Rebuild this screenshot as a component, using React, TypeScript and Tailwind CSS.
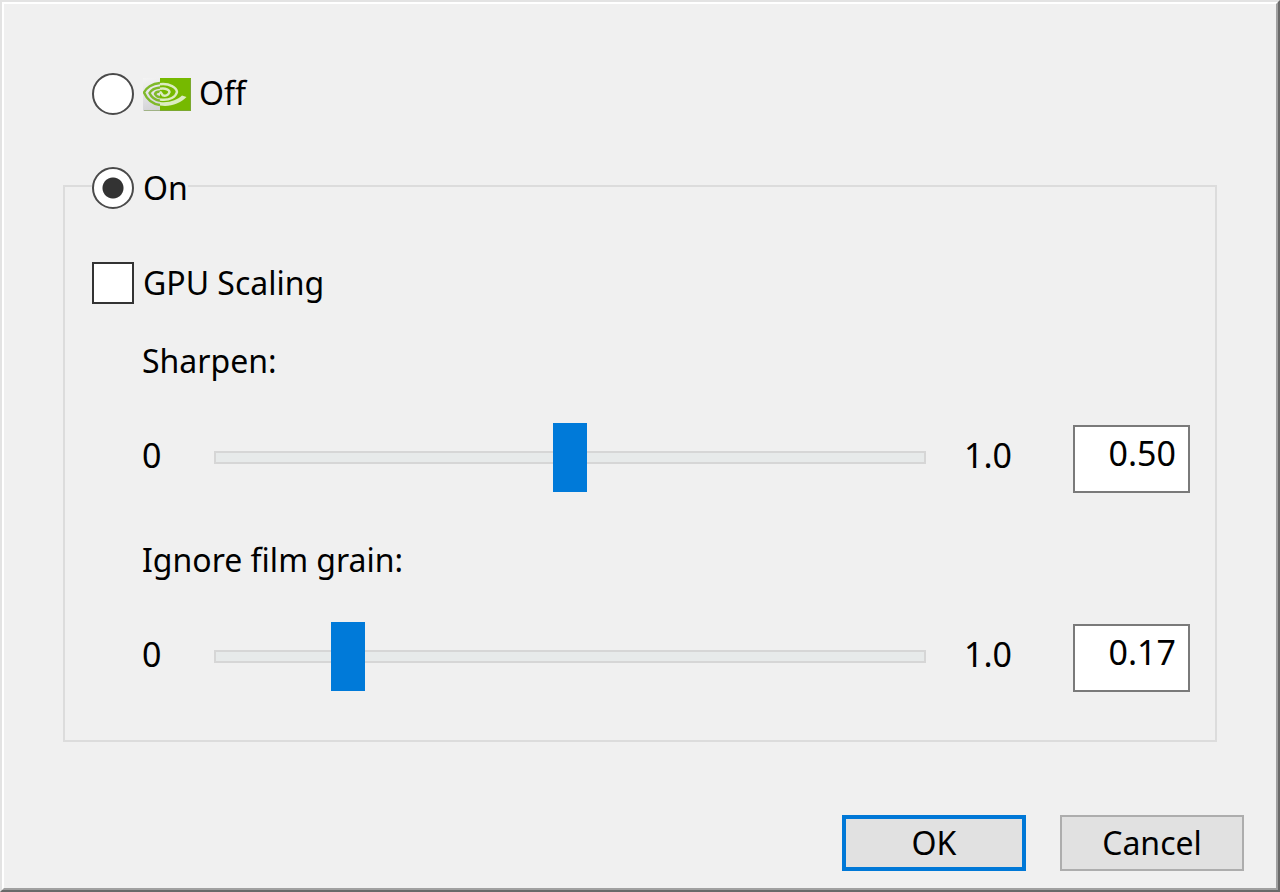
import { useState } from "react";

const radioClass =
  "size-[42px] shrink-0 appearance-none rounded-full border-2 border-[#4a4a4a] bg-white checked:bg-[radial-gradient(circle,#333333_10px,#ffffff_11px)]";

function NvidiaLogo() {
  return (
    <svg viewBox="0 0 48 33" aria-hidden="true" className="ml-[9px] h-[33px] w-12 shrink-0" fill="none">
      <defs>
        <linearGradient id="silver" x1="0" y1="0" x2="0.4" y2="1">
          <stop offset="0" stopColor="#f4f4f4" />
          <stop offset="1" stopColor="#d0d0d4" />
        </linearGradient>
      </defs>
      <rect width="48" height="33" fill="url(#silver)" />
      <rect x="17" width="31" height="33" fill="#76b900" />
      <path d="M1 32.5H47.5V1" stroke="#7f9d50" opacity="0.6" />
      <g stroke="#7fb92a" strokeWidth="2.4">
        <path d="M17 5C9 5.500 3 10 1 14.500C4 21.500 9 26 17 27" />
        <path d="M17 9.500C11 10 8 12.500 6.500 15C8.500 19.500 12 22 17 22.800" />
        <path d="M17 13.500C14 13.500 12.500 14.500 12 16C13 18 14.500 19 17 19.300" />
      </g>
      <g stroke="#dcecc0" strokeWidth="2.400">
        <path d="M17 6.200C27 5 33.500 10 34 14C33 18.500 27 23 17 21.500" />
        <path d="M17 10.800C23 9.800 26.500 12 26.500 14.200C25.500 17 22.500 18.500 20 17.500L17 13.500" />
      </g>
      <path d="M17 24C27 25 34 22 39 17.500L43.500 19C37 26 27 29 17 27.500Z" fill="#dcecc0" />
    </svg>
  );
}

type LevelProps = {
  id: string;
  label: string;
  value: number;
  onChange: (value: number) => void;
};

function Level({ id, label, value, onChange }: LevelProps) {
  return (
    <div className="pl-[50px]">
      <label htmlFor={id} className="block leading-10">
        {label}
      </label>
      <div className="mt-10 flex items-center">
        <span className="w-[72px] shrink-0 pb-1 text-[34px] leading-10">0</span>
        <input
          id={id}
          type="range"
          min={0}
          max={1}
          step={0.01}
          value={value}
          onChange={(e) => onChange(Number(e.target.value))}
          className="h-[69px] min-w-0 flex-1 appearance-none bg-transparent [&::-webkit-slider-runnable-track]:h-[13px] [&::-webkit-slider-runnable-track]:border-2 [&::-webkit-slider-runnable-track]:border-[#d6d6d6] [&::-webkit-slider-runnable-track]:bg-[#e7eaea] [&::-webkit-slider-thumb]:-mt-[30px] [&::-webkit-slider-thumb]:h-[69px] [&::-webkit-slider-thumb]:w-[34px] [&::-webkit-slider-thumb]:appearance-none [&::-webkit-slider-thumb]:bg-[#007ad9]"
        />
        <span className="w-[147px] shrink-0 pb-1 pl-[38px] text-[34px] leading-10">1.0</span>
        <input
          type="text"
          aria-label={`${label} value`}
          value={value.toFixed(2)}
          onChange={(e) => onChange(Math.min(1, Math.max(0, Number(e.target.value) || 0)))}
          className="mt-1 h-[68px] w-[117px] shrink-0 border-2 border-[#7a7a7a] bg-white pr-3 pb-3 text-right text-[34px]"
        />
      </div>
    </div>
  );
}

export default function App() {
  const [enabled, setEnabled] = useState(true);
  const [scaling, setScaling] = useState(false);
  const [sharpen, setSharpen] = useState(0.5);
  const [grain, setGrain] = useState(0.17);

  return (
    <div className="flex min-h-screen flex-col border-2 border-t-[#e3e3e3] border-r-[#696969] border-b-[#696969] border-l-[#e3e3e3] bg-[#f0f0f0] font-['Noto_Sans',sans-serif] text-[32px] text-black">
      <form
        onSubmit={(e) => e.preventDefault()}
        className="flex flex-1 flex-col border-2 border-t-white border-r-[#a0a0a0] border-b-[#a0a0a0] border-l-white pt-[69px] pb-[17px]"
      >
        <div className="px-[59px]">
          <label className="flex h-[42px] items-center pl-[29px]">
            <input
              type="radio"
              name="mode"
              checked={!enabled}
              onChange={() => setEnabled(false)}
              className={radioClass}
            />
            <NvidiaLogo />
            <span className="pb-0.5 pl-2 leading-10">Off</span>
          </label>

          <fieldset className="mt-12 border-2 border-[#dcdcdc] pr-[25px] pb-12 pl-[27px]">
            <legend className="pt-1">
              <label className="flex h-[42px] items-center">
                <input
                  type="radio"
                  name="mode"
                  checked={enabled}
                  onChange={() => setEnabled(true)}
                  className={radioClass}
                />
                <span className="pl-[9px] leading-10">On</span>
              </label>
            </legend>

            <label className="mt-[53px] flex h-[42px] w-fit items-center">
              <input
                type="checkbox"
                checked={scaling}
                onChange={(e) => setScaling(e.target.checked)}
                className="size-[42px] shrink-0 appearance-none border-2 border-[#333333] bg-white checked:bg-[#333333]"
              />
              <span className="pl-[9px] leading-10">GPU Scaling</span>
            </label>

            <div className="mt-[37px] flex flex-col gap-[47px]">
              <Level id="sharpen" label="Sharpen:" value={sharpen} onChange={setSharpen} />
              <Level id="grain" label="Ignore film grain:" value={grain} onChange={setGrain} />
            </div>
          </fieldset>
        </div>

        <div className="mt-auto flex justify-end gap-[34px] pr-8">
          <button type="submit" className="h-14 w-[184px] border-4 border-[#0078d7] bg-[#e1e1e1] leading-10">
            OK
          </button>
          <button type="button" className="h-14 w-[184px] border-2 border-[#adadad] bg-[#e1e1e1] leading-10">
            Cancel
          </button>
        </div>
      </form>
    </div>
  );
}
